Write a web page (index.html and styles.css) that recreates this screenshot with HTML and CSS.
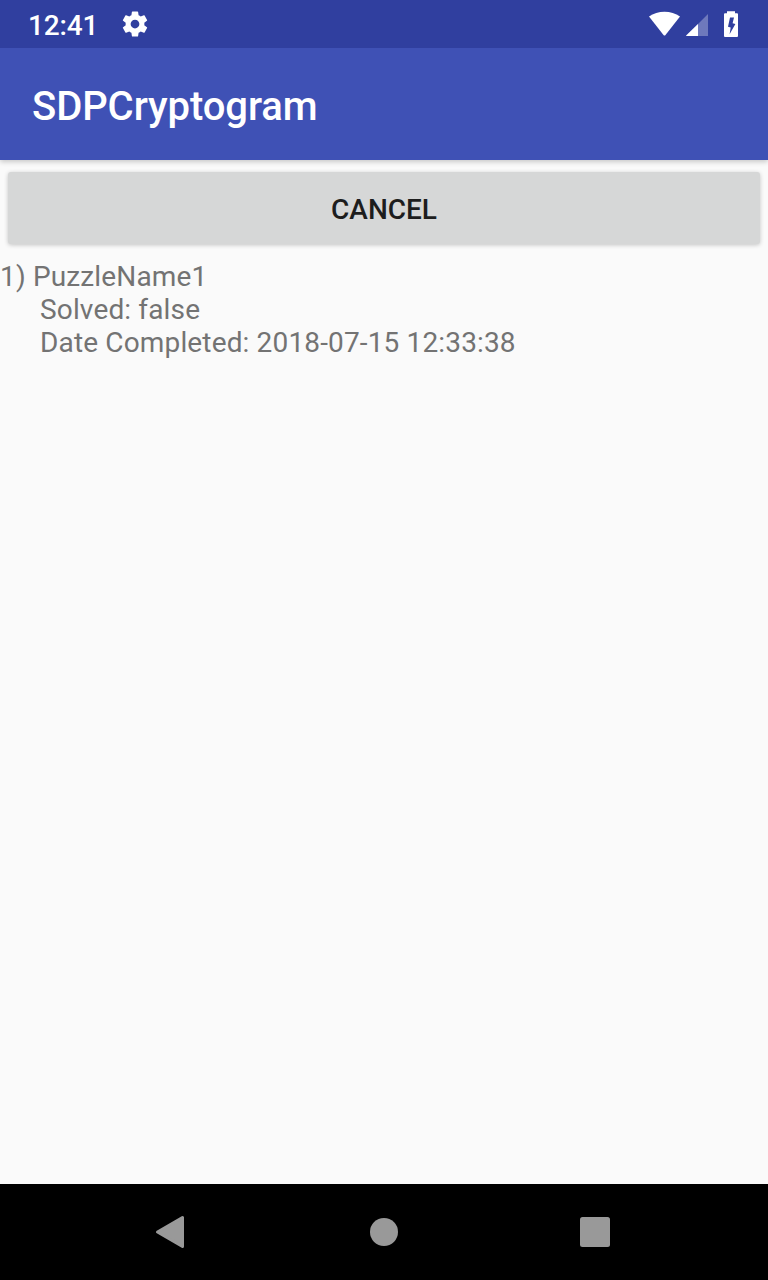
FILE: index.html
```html
<!DOCTYPE html>
<html lang="en">
<head>
<meta charset="utf-8">
<title>SDPCryptogram</title>
<link rel="stylesheet" href="styles.css">
</head>
<body>
<div class="screen">
  <div class="status-bar">
    <span class="clock">12:41</span>
    <svg class="gear" viewBox="0 0 24 24"><path fill="#fff" d="M19.43 12.98c.04-.32.07-.64.07-.98s-.03-.66-.07-.98l2.11-1.65c.19-.15.24-.42.12-.64l-2-3.46c-.12-.22-.39-.3-.61-.22l-2.49 1c-.52-.4-1.08-.73-1.69-.98l-.38-2.65C14.46 2.18 14.25 2 14 2h-4c-.25 0-.46.18-.49.42l-.38 2.65c-.61.25-1.17.59-1.69.98l-2.49-1c-.23-.09-.49 0-.61.22l-2 3.46c-.13.22-.07.49.12.64l2.11 1.65c-.04.32-.07.65-.07.98s.03.66.07.98l-2.11 1.65c-.19.15-.24.42-.12.64l2 3.46c.12.22.39.3.61.22l2.49-1c.52.4 1.08.73 1.69.98l.38 2.65c.03.24.24.42.49.42h4c.25 0 .46-.18.49-.42l.38-2.65c.61-.25 1.17-.59 1.69-.98l2.49 1c.23.09.49 0 .61-.22l2-3.46c.12-.22.07-.49-.12-.64l-2.11-1.65zM12 15.5c-1.93 0-3.5-1.57-3.5-3.5s1.57-3.5 3.5-3.5 3.5 1.57 3.5 3.5-1.57 3.5-3.500 3.500z"/></svg>
    <svg class="system-icons" viewBox="0 0 96 32">
      <path fill="#fff" d="M1 8.600C9.500 2 23.500 2 32 8.600L17.300 27.200Q16.500 28 15.700 27.200Z"/>
      <path fill="#fff" fill-opacity=".3" d="M60 6V28H38Z"/>
      <path fill="#fff" d="M50 16V28H38.600Q37.600 28 38.400 27.200Z"/>
      <path fill="#fff" fill-rule="evenodd" d="M79 3.300h8v2h2q1 0 1 1V28q0 1-1 1H77q-1 0-1-1V6.300q0-1 1-1H79ZM82 9.500H86L84.600 15.300 87.400 16 81.600 26.300 82.700 19.500 80 18.700Z"/>
    </svg>
  </div>
  <header class="app-bar"><h1 class="title">SDPCryptogram</h1></header>
  <main class="content">
    <button class="cancel">CANCEL</button>
    <div class="puzzle">
      <div>1) PuzzleName1</div>
      <div class="detail">Solved: false</div>
      <div class="detail">Date Completed: 2018-07-15 12:33:38</div>
    </div>
  </main>
  <nav class="nav-bar">
    <svg class="nav-icons" viewBox="0 0 768 96" fill="#999">
      <path d="M182.500 33.500V62.500L157.500 48Z" stroke="#999" stroke-width="3" stroke-linejoin="round"/>
      <circle cx="384" cy="48" r="14"/>
      <rect x="580" y="33" width="30" height="30" rx="2.500"/>
    </svg>
  </nav>
</div>
</body>
</html>
```
FILE: styles.css
```css
* { box-sizing: border-box; }
body { margin: 0; font-family: Roboto, sans-serif; }
.screen { width: 768px; height: 1280px; display: flex; flex-direction: column; background: #fafafa; overflow: hidden; }
.status-bar { height: 48px; flex: none; display: flex; align-items: center; padding: 0 24px 0 28px; background: #303f9f; color: #fff; }
.clock { width: 92px; padding-top: 3px; font-size: 28px; line-height: 32px; font-weight: 500; letter-spacing: -.15px; white-space: nowrap; }
.gear { width: 30px; height: 30px; }
.system-icons { width: 96px; height: 32px; margin-left: auto; }
.app-bar { height: 112px; flex: none; display: flex; align-items: center; padding: 6px 32px 0; background: #3f51b5; box-shadow: 0 2px 5px rgba(0,0,0,.2); clip-path: inset(0 0 -12px); }
.title { margin: 0; color: #fff; font-size: 40px; line-height: 48px; font-weight: 500; letter-spacing: -.08px; }
.content { flex: 1; padding-top: 12px; }
.cancel { display: block; width: 752px; height: 72px; margin: 0 8px; padding: 3px 0 0; border: 0; border-radius: 3px; background: #d6d7d7; color: #1d1d1d; font-family: inherit; font-size: 28px; font-weight: 500; box-shadow: 0 1px 4px rgba(0,0,0,.22); }
.puzzle { margin-top: 16px; color: #737373; font-size: 28px; line-height: 33px; letter-spacing: .15px; white-space: nowrap; }
.detail { padding-left: 40px; }
.nav-bar { height: 96px; flex: none; background: #000; }
.nav-icons { display: block; width: 768px; height: 96px; }
```
